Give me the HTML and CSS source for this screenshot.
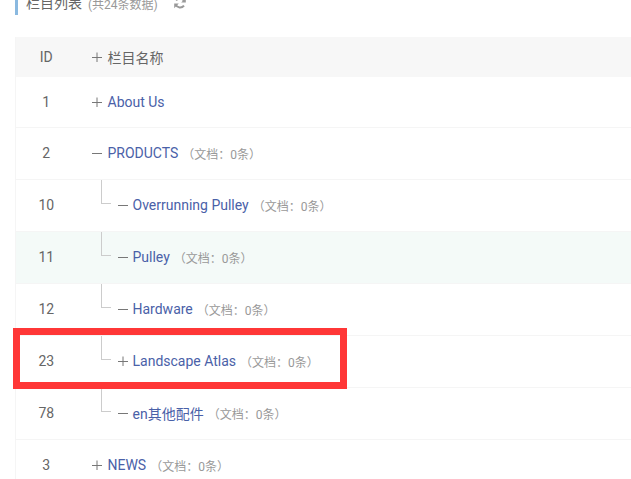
FILE: index.html
```html
<!DOCTYPE html>
<html lang="en">
  <head>
    <meta charset="UTF-8" />
    <title>栏目列表</title>
    <link rel="stylesheet" href="styles.css">
  </head>
  <body>
    <div class="page">
      <div class="title-bar">
        <span class="title">栏目列表</span>
        <span class="title-note">(共24条数据)</span>
        <svg class="refresh" viewBox="0 0 12 12" width="12" height="12">
          <path d="M10.4 4.4A5 5 0 0 0 2 3.4M1.6 7.6A5 5 0 0 0 10 8.6" fill="none" stroke="#999" stroke-width="2"/>
          <path d="M11.8 .8v4.6H7.2zM.2 11.2V6.6h4.6z" fill="#999"/>
        </svg>
      </div>
      <table class="list">
        <thead>
          <tr>
            <th class="col-id">ID</th>
            <th>
              <div class="tree">
                <svg class="toggle" viewBox="0 0 10 10" width="10" height="10"><path d="M0 5.5h10M5 .5v10" stroke="#777"/></svg>
                <span>栏目名称</span>
              </div>
            </th>
          </tr>
        </thead>
        <tbody>
          <tr>
            <td class="col-id">1</td>
            <td>
              <div class="tree">
                <svg class="toggle" viewBox="0 0 10 10" width="10" height="10"><path d="M0 5.5h10M5 .5v10" stroke="#777"/></svg>
                <a class="name">About Us</a>
              </div>
            </td>
          </tr>
          <tr>
            <td class="col-id">2</td>
            <td>
              <div class="tree">
                <svg class="toggle" viewBox="0 0 10 10" width="10" height="10"><path d="M0 5.5h10" stroke="#777"/></svg>
                <a class="name">PRODUCTS</a><span class="count">（文档：0条）</span>
              </div>
            </td>
          </tr>
          <tr>
            <td class="col-id">10</td>
            <td>
              <div class="tree">
                <i class="elbow"></i>
                <svg class="toggle" viewBox="0 0 10 10" width="10" height="10"><path d="M0 5.5h10" stroke="#777"/></svg>
                <a class="name">Overrunning Pulley</a><span class="count">（文档：0条）</span>
              </div>
            </td>
          </tr>
          <tr class="hover">
            <td class="col-id">11</td>
            <td>
              <div class="tree">
                <i class="elbow"></i>
                <svg class="toggle" viewBox="0 0 10 10" width="10" height="10"><path d="M0 5.5h10" stroke="#777"/></svg>
                <a class="name">Pulley</a><span class="count">（文档：0条）</span>
              </div>
            </td>
          </tr>
          <tr>
            <td class="col-id">12</td>
            <td>
              <div class="tree">
                <i class="elbow"></i>
                <svg class="toggle" viewBox="0 0 10 10" width="10" height="10"><path d="M0 5.5h10" stroke="#777"/></svg>
                <a class="name">Hardware</a><span class="count">（文档：0条）</span>
              </div>
            </td>
          </tr>
          <tr>
            <td class="col-id">23</td>
            <td>
              <div class="tree">
                <i class="elbow"></i>
                <svg class="toggle" viewBox="0 0 10 10" width="10" height="10"><path d="M0 5.5h10M5 .5v10" stroke="#777"/></svg>
                <a class="name">Landscape Atlas</a><span class="count">（文档：0条）</span>
              </div>
            </td>
          </tr>
          <tr>
            <td class="col-id">78</td>
            <td>
              <div class="tree">
                <i class="elbow"></i>
                <svg class="toggle" viewBox="0 0 10 10" width="10" height="10"><path d="M0 5.5h10" stroke="#777"/></svg>
                <a class="name">en其他配件</a><span class="count">（文档：0条）</span>
              </div>
            </td>
          </tr>
          <tr>
            <td class="col-id">3</td>
            <td>
              <div class="tree">
                <svg class="toggle" viewBox="0 0 10 10" width="10" height="10"><path d="M0 5.5h10M5 .5v10" stroke="#777"/></svg>
                <a class="name">NEWS</a><span class="count">（文档：0条）</span>
              </div>
            </td>
          </tr>
        </tbody>
      </table>
      <div class="mark"></div>
    </div>
  </body>
</html>
```

FILE: styles.css
```css
* {
  margin: 0;
  padding: 0;
  box-sizing: border-box;
}
html,
body {
  height: 479px;
  overflow: hidden;
  background: #fff;
}
body {
  font-family: Roboto, "Noto Sans CJK SC", sans-serif;
  font-size: 14px;
  color: #666;
}
.page {
  position: relative;
  width: 760px;
  padding-left: 15px;
}
.title-bar {
  display: flex;
  align-items: center;
  height: 30px;
  margin-top: -15px;
  padding-top: 6px;
  padding-left: 8px;
  border-left: 3px solid #8ab9e0;
}
.title {
  color: #666;
  line-height: 20px;
}
.title-note {
  margin-left: 6px;
  font-size: 12px;
  color: #999;
}
.refresh {
  margin-left: 16px;
}
.list {
  width: 100%;
  margin-top: 22px;
  border-collapse: collapse;
  border-left: 1px solid #f5f5f5;
}
.list th {
  height: 40px;
  background: #f7f7f7;
  font-weight: normal;
  text-align: left;
}
.list td {
  height: 52px;
  border-bottom: 1px solid #f5f5f5;
}
.list tbody tr:first-child td {
  height: 50px;
}
.list .col-id {
  width: 61px;
  text-align: center;
  color: #666;
}
.list th,
.list td {
  vertical-align: middle;
}
.hover td {
  background: #f4faf8;
}
.tree {
  display: flex;
  align-items: center;
  height: 51px;
  padding-left: 15px;
}
tbody tr:first-child .tree {
  height: 49px;
}
th .tree {
  height: 40px;
}
.elbow {
  align-self: flex-start;
  width: 10px;
  height: 24px;
  margin-left: 9px;
  margin-right: 7px;
  border-left: 1px solid #ccc;
  border-bottom: 1px solid #ccc;
}
.toggle {
  flex: none;
  margin-right: 6px;
}
.elbow + .toggle {
  margin-right: 5px;
}
.name {
  color: #4a61a8;
}
.count {
  margin-left: 4px;
  font-size: 12px;
  color: #999;
}
.mark {
  position: absolute;
  left: 13px;
  top: 343px;
  width: 334px;
  height: 61px;
  border: 7px solid #ff3737;
}
```
